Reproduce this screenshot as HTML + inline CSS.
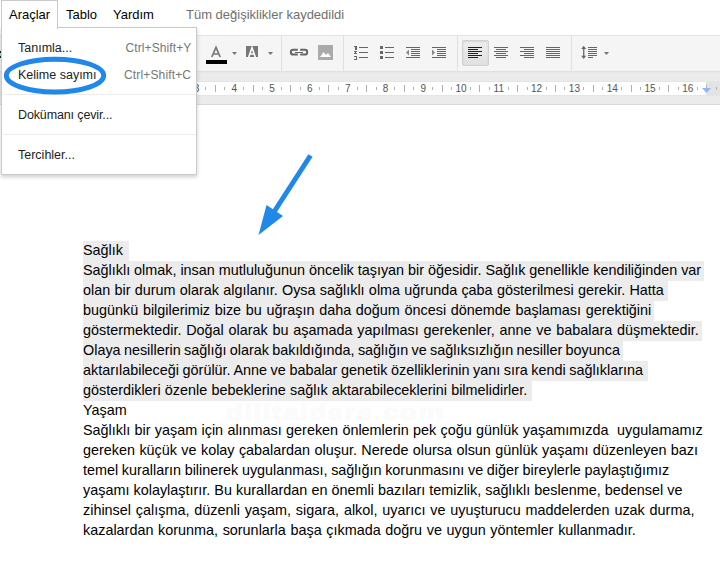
<!DOCTYPE html>
<html><head><meta charset="utf-8">
<style>
html,body{margin:0;padding:0;}
body{width:720px;height:561px;overflow:hidden;position:relative;background:#fff;font-family:"Liberation Sans",sans-serif;}
.abs{position:absolute;white-space:pre;line-height:1;}
.it{font-size:13px;color:#000;}
#status{font-size:13px;color:#707070;}
#toolbar{position:absolute;left:0;top:35px;width:720px;height:36px;background:#f5f5f5;}
.hl{position:absolute;left:0;width:720px;height:1px;}
#toolbar .sep{position:absolute;top:0;width:1px;height:36px;background:#e0e0e0;}
#rulerbar{position:absolute;left:0;top:71px;width:720px;height:34px;background:#ebebeb;}
#ruler{position:absolute;left:84px;top:11px;width:622px;height:13px;background:#fff;}
.rn{position:absolute;top:13px;font-size:10px;color:#555;line-height:1;white-space:pre;}
.tk{position:absolute;width:1px;background:#b0b0b0;}
#menu{position:absolute;left:1px;top:27px;width:196px;height:148px;background:#fff;border:1px solid #cacaca;box-sizing:border-box;box-shadow:0 2px 4px rgba(0,0,0,.2);}
#tab{position:absolute;left:1px;top:0;width:57px;height:29px;background:#fff;border:1px solid #cacaca;border-bottom:none;box-sizing:border-box;}
.mi{position:absolute;font-size:12.5px;margin-left:-1px;color:#222;white-space:pre;line-height:1;}
.sc{position:absolute;font-size:12px;color:#777;white-space:pre;line-height:1;}
.msep{position:absolute;left:1px;width:193px;height:1px;background:#ebebeb;}
#doc .ln{position:absolute;left:83px;height:20px;line-height:18px;font-size:14.4px;color:#000;white-space:pre;}
#doc .sr{position:absolute;left:83px;height:20px;background:#ececec;}
</style></head><body>

<!-- watermark -->
<div class="abs" id="wm" style="left:226px;top:402px;font-size:22px;font-weight:bold;color:#fbfbfb;letter-spacing:1.3px;transform:scaleX(1.25);transform-origin:0 0;-webkit-text-stroke:0.8px #fbfbfb;">dijitalders.com</div>

<!-- menu bar -->
<div id="menubar">
  <div class="abs it" style="left:66px;top:8px;">Tablo</div>
  <div class="abs it" style="left:113px;top:8px;">Yardım</div>
  <div id="status" class="abs" style="left:186px;top:8px;">Tüm değişiklikler kaydedildi</div>
</div>

<!-- toolbar -->
<div id="toolbar">
  <div class="sep" style="left:281px"></div>
  <div class="sep" style="left:343px"></div>
  <div class="sep" style="left:457px"></div>
  <div class="sep" style="left:571px"></div>
  <div style="position:absolute;left:462px;top:5px;width:27px;height:26px;box-sizing:border-box;border:1px solid #d0d0d0;border-radius:2px;background:linear-gradient(#eeeeee,#e0e0e0);box-shadow:inset 0 1px 2px rgba(0,0,0,.1);"></div>
  <svg width="720" height="36" viewBox="0 35 720 36" style="position:absolute;left:0;top:0" shape-rendering="crispEdges">
    <g>
    <!-- text color A -->
    <path d="M211.8 57 L216 47.3 L220.2 57 M213.3 54 H218.7" stroke="#777" stroke-width="1.7" fill="none" shape-rendering="geometricPrecision"/>
    <rect x="206" y="60" width="21" height="4" fill="#000"/>
    <path d="M232 52 h5 l-2.5 3 z" fill="#777" shape-rendering="geometricPrecision"/>
    <!-- highlight A -->
    <rect x="246" y="46" width="12" height="11" fill="#777"/>
    <path d="M248.6 57.5 L252 47.6 L255.4 57.5 M249.8 54 H254.2" stroke="#fff" stroke-width="1.6" fill="none" shape-rendering="geometricPrecision"/>
    <path d="M268 52 h5 l-2.5 3 z" fill="#777" shape-rendering="geometricPrecision"/>
    <!-- link -->
    <g fill="none" stroke="#666" stroke-width="2" shape-rendering="geometricPrecision">
      <path d="M297.8 49.8 H293.2 a2.4 2.4 0 0 0 0 4.8 H297.8"/>
      <path d="M300.2 49.8 H304.8 a2.4 2.4 0 0 1 0 4.8 H300.2"/>
    </g>
    <rect x="295" y="52" width="8" height="1" fill="#666"/>
    <!-- image -->
    <rect x="318" y="45" width="15" height="15" fill="#aaa"/>
    <path d="M320 57 L323.5 52 L326 55 L328 53 L331 57 Z" fill="#fff" shape-rendering="geometricPrecision"/>
    <!-- numbered list -->
    <g fill="#666">
      <rect x="359" y="47" width="9" height="1"/><rect x="359" y="52" width="9" height="1"/><rect x="359" y="57" width="9" height="1"/>
      <rect x="354" y="46" width="2" height="1"/><rect x="355" y="46" width="2" height="4"/>
      <rect x="354" y="51" width="3" height="1"/><rect x="355" y="52" width="1" height="1"/><rect x="354" y="53" width="3" height="1"/>
      <rect x="354" y="56" width="3" height="1"/><rect x="356" y="56" width="1" height="4"/><rect x="354" y="59" width="3" height="1"/>
    </g>
    <!-- bullet list -->
    <g fill="#666">
      <rect x="380" y="46" width="3" height="3"/><rect x="380" y="51" width="3" height="3"/><rect x="380" y="56" width="3" height="3"/>
      <rect x="385" y="47" width="9" height="1"/><rect x="385" y="52" width="9" height="1"/><rect x="385" y="57" width="9" height="1"/>
    </g>
    <!-- decrease indent -->
    <g fill="#666">
      <rect x="406" y="47" width="14" height="1"/><rect x="411" y="49" width="9" height="1"/><rect x="411" y="51" width="9" height="1"/><rect x="411" y="53" width="9" height="1"/><rect x="411" y="55" width="9" height="1"/><rect x="406" y="57" width="14" height="1"/>
      <path d="M409 49.5 V55.5 L406 52.5 Z" fill="#888" shape-rendering="geometricPrecision"/>
    </g>
    <!-- increase indent -->
    <g fill="#666">
      <rect x="432" y="47" width="14" height="1"/><rect x="437" y="49" width="9" height="1"/><rect x="437" y="51" width="9" height="1"/><rect x="437" y="53" width="9" height="1"/><rect x="437" y="55" width="9" height="1"/><rect x="432" y="57" width="14" height="1"/>
      <path d="M432 49.5 V55.5 L435 52.5 Z" fill="#888" shape-rendering="geometricPrecision"/>
    </g>
    <!-- align left (active) -->
    <g fill="#222">
      <rect x="468" y="47" width="14" height="1"/><rect x="468" y="49" width="10" height="1"/><rect x="468" y="51" width="14" height="1"/><rect x="468" y="53" width="10" height="1"/><rect x="468" y="55" width="14" height="1"/><rect x="468" y="57" width="10" height="1"/>
    </g>
    <!-- align center -->
    <g fill="#666">
      <rect x="494" y="47" width="14" height="1"/><rect x="496" y="49" width="10" height="1"/><rect x="494" y="51" width="14" height="1"/><rect x="496" y="53" width="10" height="1"/><rect x="494" y="55" width="14" height="1"/><rect x="496" y="57" width="10" height="1"/>
    </g>
    <!-- align right -->
    <g fill="#666">
      <rect x="520" y="47" width="14" height="1"/><rect x="524" y="49" width="10" height="1"/><rect x="520" y="51" width="14" height="1"/><rect x="524" y="53" width="10" height="1"/><rect x="520" y="55" width="14" height="1"/><rect x="524" y="57" width="10" height="1"/>
    </g>
    <!-- justify -->
    <g fill="#666">
      <rect x="546" y="47" width="14" height="1"/><rect x="546" y="49" width="14" height="1"/><rect x="546" y="51" width="14" height="1"/><rect x="546" y="53" width="14" height="1"/><rect x="546" y="55" width="14" height="1"/><rect x="546" y="57" width="14" height="1"/>
    </g>
    <!-- line spacing -->
    <g fill="#666">
      <rect x="583.1" y="48" width="1.3" height="9" shape-rendering="geometricPrecision"/>
      <path d="M583.7 45.8 L586.2 49 H581.2 Z M583.7 59 L586.2 55.8 H581.2 Z" shape-rendering="geometricPrecision"/>
      <rect x="588" y="47" width="9" height="1"/><rect x="588" y="49" width="9" height="1"/><rect x="588" y="51" width="9" height="1"/><rect x="588" y="53" width="9" height="1"/><rect x="588" y="55" width="9" height="1"/><rect x="588" y="57" width="5" height="1"/>
    </g>
    <path d="M604 52 h5 l-2.5 3 z" fill="#777" shape-rendering="geometricPrecision"/>
    </g>
  </svg>
</div>

<!-- ruler -->
<div id="rulerbar">
  <div id="ruler"></div>
  <div style="position:absolute;left:706px;top:11px;width:14px;height:13px;background:#e3e3e3"></div>
  <div id="rticks">
<div class="tk" style="left:16px;top:16px;height:3px"></div>
<div class="tk" style="left:26px;top:14px;height:7px"></div>
<div class="tk" style="left:35px;top:16px;height:3px"></div>
<div class="tk" style="left:54px;top:16px;height:3px"></div>
<div class="tk" style="left:64px;top:14px;height:7px"></div>
<div class="tk" style="left:73px;top:16px;height:3px"></div>
<div class="tk" style="left:92px;top:16px;height:3px"></div>
<div class="tk" style="left:101px;top:14px;height:7px"></div>
<div class="tk" style="left:111px;top:16px;height:3px"></div>
<div class="tk" style="left:130px;top:16px;height:3px"></div>
<div class="tk" style="left:139px;top:14px;height:7px"></div>
<div class="tk" style="left:149px;top:16px;height:3px"></div>
<div class="rn" style="left:100.9px;width:40px;text-align:center">1</div>
<div class="tk" style="left:168px;top:16px;height:3px"></div>
<div class="tk" style="left:177px;top:14px;height:7px"></div>
<div class="tk" style="left:187px;top:16px;height:3px"></div>
<div class="rn" style="left:138.7px;width:40px;text-align:center">2</div>
<div class="tk" style="left:205px;top:16px;height:3px"></div>
<div class="tk" style="left:215px;top:14px;height:7px"></div>
<div class="tk" style="left:224px;top:16px;height:3px"></div>
<div class="rn" style="left:176.5px;width:40px;text-align:center">3</div>
<div class="tk" style="left:243px;top:16px;height:3px"></div>
<div class="tk" style="left:253px;top:14px;height:7px"></div>
<div class="tk" style="left:262px;top:16px;height:3px"></div>
<div class="rn" style="left:214.3px;width:40px;text-align:center">4</div>
<div class="tk" style="left:281px;top:16px;height:3px"></div>
<div class="tk" style="left:290px;top:14px;height:7px"></div>
<div class="tk" style="left:300px;top:16px;height:3px"></div>
<div class="rn" style="left:252.1px;width:40px;text-align:center">5</div>
<div class="tk" style="left:319px;top:16px;height:3px"></div>
<div class="tk" style="left:328px;top:14px;height:7px"></div>
<div class="tk" style="left:338px;top:16px;height:3px"></div>
<div class="rn" style="left:289.9px;width:40px;text-align:center">6</div>
<div class="tk" style="left:357px;top:16px;height:3px"></div>
<div class="tk" style="left:366px;top:14px;height:7px"></div>
<div class="tk" style="left:376px;top:16px;height:3px"></div>
<div class="rn" style="left:327.7px;width:40px;text-align:center">7</div>
<div class="tk" style="left:394px;top:16px;height:3px"></div>
<div class="tk" style="left:404px;top:14px;height:7px"></div>
<div class="tk" style="left:413px;top:16px;height:3px"></div>
<div class="rn" style="left:365.5px;width:40px;text-align:center">8</div>
<div class="tk" style="left:432px;top:16px;height:3px"></div>
<div class="tk" style="left:442px;top:14px;height:7px"></div>
<div class="tk" style="left:451px;top:16px;height:3px"></div>
<div class="rn" style="left:403.3px;width:40px;text-align:center">9</div>
<div class="tk" style="left:470px;top:16px;height:3px"></div>
<div class="tk" style="left:479px;top:14px;height:7px"></div>
<div class="tk" style="left:489px;top:16px;height:3px"></div>
<div class="rn" style="left:441.1px;width:40px;text-align:center">10</div>
<div class="tk" style="left:508px;top:16px;height:3px"></div>
<div class="tk" style="left:517px;top:14px;height:7px"></div>
<div class="tk" style="left:527px;top:16px;height:3px"></div>
<div class="rn" style="left:478.8px;width:40px;text-align:center">11</div>
<div class="tk" style="left:546px;top:16px;height:3px"></div>
<div class="tk" style="left:555px;top:14px;height:7px"></div>
<div class="tk" style="left:564px;top:16px;height:3px"></div>
<div class="rn" style="left:516.6px;width:40px;text-align:center">12</div>
<div class="tk" style="left:583px;top:16px;height:3px"></div>
<div class="tk" style="left:593px;top:14px;height:7px"></div>
<div class="tk" style="left:602px;top:16px;height:3px"></div>
<div class="rn" style="left:554.4px;width:40px;text-align:center">13</div>
<div class="tk" style="left:621px;top:16px;height:3px"></div>
<div class="tk" style="left:631px;top:14px;height:7px"></div>
<div class="tk" style="left:640px;top:16px;height:3px"></div>
<div class="rn" style="left:592.2px;width:40px;text-align:center">14</div>
<div class="tk" style="left:659px;top:16px;height:3px"></div>
<div class="tk" style="left:668px;top:14px;height:7px"></div>
<div class="tk" style="left:678px;top:16px;height:3px"></div>
<div class="rn" style="left:630.0px;width:40px;text-align:center">15</div>
<div class="tk" style="left:697px;top:16px;height:3px"></div>
<div class="tk" style="left:706px;top:14px;height:7px"></div>
<div class="tk" style="left:716px;top:16px;height:3px"></div>
<div class="rn" style="left:667.8px;width:40px;text-align:center">16</div>
</div>
</div>
</div>
</div>

<div class="hl" style="top:35px;background:#e5e5e5"></div>
<div class="hl" style="top:71px;background:#e0e0e0"></div>
<div class="hl" style="top:72px;background:#e7e7e7"></div>
<div class="hl" style="top:81px;background:#e5e5e5"></div>
<div class="hl" style="top:95px;background:#e5e5e5"></div>
<div class="hl" style="top:104px;background:#d8d8d8"></div>
<svg width="20" height="10" style="position:absolute;left:700px;top:86px"><path d="M2 2 H11 L6.5 7 Z" fill="#8fb6f2"/></svg>
<!-- document -->
<div id="doc">
<div class="sr" style="top:241px;width:46.0px"></div>
<div class="sr" style="top:261px;width:621.0px"></div>
<div class="sr" style="top:281px;width:585.0px"></div>
<div class="sr" style="top:301px;width:571.0px"></div>
<div class="sr" style="top:321px;width:619.0px"></div>
<div class="sr" style="top:341px;width:540.0px"></div>
<div class="sr" style="top:361px;width:564.5px"></div>
<div class="sr" style="top:381px;width:448.5px"></div>
<div class="ln" style="top:241px;word-spacing:0.000px">Sağlık</div>
<div class="ln" style="top:261px;word-spacing:-0.091px">Sağlıklı olmak, insan mutluluğunun öncelik taşıyan bir öğesidir. Sağlık genellikle kendiliğinden var</div>
<div class="ln" style="top:281px;word-spacing:0.275px">olan bir durum olarak algılanır. Oysa sağlıklı olma uğrunda çaba gösterilmesi gerekir. Hatta</div>
<div class="ln" style="top:301px;word-spacing:0.670px">bugünkü bilgilerimiz bize bu uğraşın daha doğum öncesi dönemde başlaması gerektiğini</div>
<div class="ln" style="top:321px;word-spacing:0.770px">göstermektedir. Doğal olarak bu aşamada yapılması gerekenler, anne ve babalara düşmektedir.</div>
<div class="ln" style="top:341px;word-spacing:-0.694px">Olaya nesillerin sağlığı olarak bakıldığında, sağlığın ve sağlıksızlığın nesiller boyunca</div>
<div class="ln" style="top:361px;word-spacing:-0.400px">aktarılabileceği görülür. Anne ve babalar genetik özelliklerinin yanı sıra kendi sağlıklarına</div>
<div class="ln" style="top:381px;word-spacing:0.200px">gösterdikleri özenle bebeklerine sağlık aktarabileceklerini bilmelidirler.</div>
<div class="ln" style="top:401px;word-spacing:0.000px">Yaşam</div>
<div class="ln" style="top:421px;word-spacing:0.308px">Sağlıklı bir yaşam için alınması gereken önlemlerin pek çoğu günlük yaşamımızda  uygulamamız</div>
<div class="ln" style="top:441px;word-spacing:0.383px">gereken küçük ve kolay çabalardan oluşur. Nerede olursa olsun günlük yaşamı düzenleyen bazı</div>
<div class="ln" style="top:461px;word-spacing:-0.356px">temel kuralların bilinerek uygulanması, sağlığın korunmasını ve diğer bireylerle paylaştığımız</div>
<div class="ln" style="top:481px;word-spacing:0.109px">yaşamı kolaylaştırır. Bu kurallardan en önemli bazıları temizlik, sağlıklı beslenme, bedensel ve</div>
<div class="ln" style="top:501px;word-spacing:0.827px">zihinsel çalışma, düzenli yaşam, sigara, alkol, uyarıcı ve uyuşturucu maddelerden uzak durma,</div>
<div class="ln" style="top:521px;word-spacing:0.622px">kazalardan korunma, sorunlarla başa çıkmada doğru ve uygun yöntemler kullanmadır.</div>
</div>
<!-- arrow -->
<svg width="720" height="561" style="position:absolute;left:0;top:0">
  <path d="M310.5 155.5 L272 215" stroke="#2088e8" stroke-width="5" fill="none"/>
  <path d="M258.5 235 L266.5 205 L283 216 Z" fill="#2088e8"/>
</svg>

<div style="position:absolute;left:0;top:51px;width:1px;height:7px;background:linear-gradient(#222 0,#222 28%,#8de 28%,#8de 72%,#222 72%)"></div>
<!-- dropdown menu -->
<div id="menu">
  <div class="mi" style="left:17px;top:14px;">Tanımla...</div>
  <div class="sc" style="left:123.5px;top:14px;letter-spacing:0.1px">Ctrl+Shift+Y</div>
  <div class="mi" style="left:17px;top:41px;">Kelime sayımı</div>
  <div class="sc" style="left:122px;top:41px;letter-spacing:0.15px">Ctrl+Shift+C</div>
  <div class="msep" style="top:66px"></div>
  <div class="mi" style="left:17px;top:81px;letter-spacing:-0.13px">Dokümanı çevir...</div>
  <div class="msep" style="top:106px"></div>
  <div class="mi" style="left:17px;top:121px;">Tercihler...</div>
</div>
<div id="tab"></div>
<div class="abs it" style="left:9px;top:8px;font-size:13px;color:#000;">Araçlar</div>

<!-- ellipse -->
<svg width="720" height="561" style="position:absolute;left:0;top:0">
  <ellipse cx="55" cy="75.6" rx="48.7" ry="16.4" stroke="#2088e8" stroke-width="4.9" fill="none"/>
</svg>

</body></html>
